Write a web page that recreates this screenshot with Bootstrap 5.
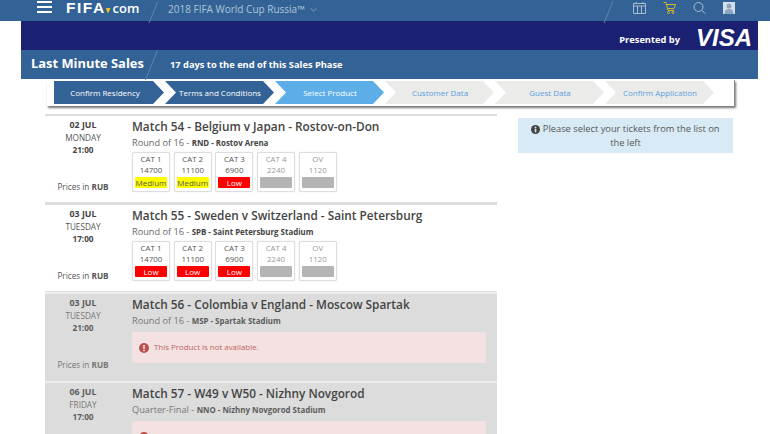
<!DOCTYPE html>
<html lang="en">
<head>
    <meta charset="UTF-8">
    <meta name="viewport" content="width=device-width, initial-scale=1.0">
    <title>Last Minute Sales</title>
    <link href="https://cdn.jsdelivr.net/npm/bootstrap@5.3.3/dist/css/bootstrap.min.css" rel="stylesheet">
    <style>
        html, body { height: 434px; overflow: hidden; }
        body { font-family: "Open Sans", "Liberation Sans", sans-serif; font-size: 10px; color: #555; background: #fff; }
        .top-bar { height: 21px; background: #336396; color: #b0c4d8; }
        .burger { width: 15px; margin-left: 37px; margin-top: 1px; }
        .burger span { display: block; height: 2px; background: #fff; margin-bottom: 3px; }
        .fifa-logo { margin-left: 14px; width: 87px; font-family: "Liberation Sans", sans-serif; font-size: 15.5px; font-weight: 700; color: #fff; line-height: 15px; display: flex; align-items: baseline; }
        .fifa-logo b { letter-spacing: 1.5px; }
        .fifa-logo svg { margin: 0 2px 0 0; }
        .fifa-logo em { font-style: normal; font-family: "Open Sans", sans-serif; font-size: 13px; font-weight: 600; }
        .slash { width: 1px; background: #5d83aa; transform: rotate(22deg); }
        .top-bar .slash { height: 24px; }
        .edition { margin-left: 14px; font-size: 10px; line-height: 18px; }
        .top-icons { margin-right: 35px; margin-top: 2px; gap: 17px; }
        .page-head { margin: 0 12px 0 21px; }
        .visa-band { height: 29px; background: #1a2172; color: #fff; padding-right: 6px; }
        .visa-band small { font-size: 9.3px; font-weight: 700; margin-right: 16px; margin-top: 8px; }
        .visa-word { font-family: "Liberation Sans", sans-serif; font-style: italic; font-weight: 700; font-size: 24px; line-height: 29px; margin-top: 3px; }
        .title-bar { height: 29px; background: #336396; color: #fff; font-weight: 700; padding-left: 10px; }
        .title-bar h1 { font-size: 12.9px; font-weight: 700; margin: 0 0 2px; width: 120px; }
        .title-bar .slash { height: 32px; margin-right: 18px; }
        .title-bar p { font-size: 9.3px; margin: 1px 0 0; }
        .stepper { margin: 1px 35px 0 47px; height: 26px; padding: 1px 0 2px 7px; box-shadow: 1px 2px 2px #777; border-right: 1px solid #888; }
        .step-item { width: 110px; flex: none; height: 23px; background: #ebebe9; color: #5d9ee0; font-size: 8px; display: flex; align-items: center; justify-content: center; clip-path: polygon(0 0, 98px 0, 109px 50%, 98px 100%, 0 100%, 11px 50%); }
        .step-item:first-child { width: 111px; padding-right: 9px; clip-path: polygon(0 0, 99px 0, 110px 50%, 99px 100%, 0 100%); }
        .step-done { background: #336396; color: #fff; }
        .step-now { background: #5daee8; color: #fff; }
        .main-area { padding: 8px 0 0 45px; gap: 21px; }
        .match-list { width: 452px; flex: none; }
        .match-row { display: flex; border-top: 2px solid #ddd; border-bottom: 1px solid #ddd; height: 89px; padding-top: 4px; }
        .match-off { background: #dcdcdc; border-top-color: #eee; color: #777; }
        .date-col { width: 87px; margin-top: -1px; text-align: center; display: flex; flex-direction: column; line-height: 12px; font-size: 8.2px; }
        .date-col > div { width: 76px; }
        .date-day { font-weight: 700; color: #444; font-size: 8.8px; margin-bottom: .5px; }
        .date-name { margin-bottom: .5px; }
        .date-time { font-weight: 700; color: #444; }
        .price-note { margin-top: auto; margin-bottom: 9px; }
        .match-off .date-day, .match-off .date-time, .match-off h2, .match-off .round-line b { color: #5c5c5c; }
        .match-off .round-line { color: #777; }
        .info-col { flex: 1; padding-right: 11px; }
        .info-col h2 { font-size: 11.8px; font-weight: 600; color: #444; margin: -2px 0 1px; line-height: 17px; }
        .round-line { font-size: 9.2px; line-height: 13px; margin-bottom: 2px; color: #666; }
        .round-line b { font-size: 7.9px; color: #444; }
        .cat-wrap { gap: 3.7px; }
        .cat-box { width: 38px; height: 40px; padding: 1px 2px; border: 1px solid #ddd; border-radius: 2px; text-align: center; font-size: 7.9px; line-height: 11px; box-shadow: 0 0 1px #ccc; background: #fff; }
        .cat-box span { display: block; }
        .cat-tag { height: 11px; margin-top: 1px; font-size: 8px; line-height: 11px; border-radius: 1px; }
        .tag-med { background: #ffff00; color: #555; }
        .tag-low { background: #ff0000; color: #fff; }
        .tag-none { background: #b4b4b4; }
        .cat-off { color: #999; }
        .no-product { margin: 4px 0 0; height: 31px; background: #f4e1e1; color: #bd6461; border-radius: 2px; font-size: 7.9px; padding: 0 7px; gap: 5px; }
        .select-note { width: 215px; height: 35px; margin-top: 4px; background: #d9eaf7; color: #555; font-size: 9.3px; line-height: 14px; text-align: center; padding: 4px 12px; }
    </style>
</head>
<body>

<div class="top-bar d-flex align-items-start">
    <div class="burger"><span></span><span></span><span></span></div>
    <div class="fifa-logo"><b>FIFA</b><svg width="5" height="5" viewBox="0 0 5 5"><path d="M0 0h4.500L2.500 4.500 1.500 5z" fill="#f2c318"/></svg><em>com</em></div>
    <div class="slash"></div>
    <div class="edition">2018 FIFA World Cup Russia™ &nbsp;<svg width="7" height="4" viewBox="0 0 7 4" fill="none" stroke="#9fb6cd" stroke-width=".7"><path d="M.5.5 3.500 3 6.500.5"/></svg></div>
    <div class="slash ms-auto me-4"></div>
    <div class="top-icons d-flex align-items-start">
        <svg width="13" height="12" viewBox="0 0 13 12" fill="none" stroke="#a9bdd1" stroke-width="1"><path d="M.5 1.500h12v10H.5zM.5 4h12M4.500 4v7.500M8.500 4v7.500M3 0v2M10 0v2"/></svg>
        <svg width="13" height="12" viewBox="0 0 13 12" fill="none" stroke="#d9b32a" stroke-width="1"><path d="M.5 .5H3l2 8h6M3.500 2.500h9l-1.500 4H4.500"/><circle cx="5.500" cy="10.500" r="1"/><circle cx="10" cy="10.500" r="1"/></svg>
        <svg width="13" height="12" viewBox="0 0 13 12" fill="none" stroke="#a9bdd1" stroke-width="1"><circle cx="5.500" cy="5" r="4.500"/><path d="M8.800 8.300l3.500 3.500"/></svg>
        <svg width="12" height="12" viewBox="0 0 12 12"><rect width="12" height="12" fill="#d5dfe9"/><circle cx="6" cy="4" r="2.500" fill="#8ca6c0"/><path d="M1.500 12c0-4 2-5 4.500-5s4.500 1 4.500 5z" fill="#8ca6c0"/></svg>
    </div>
</div>

<div class="page-head">
    <div class="visa-band d-flex justify-content-end align-items-center">
        <small>Presented by</small>
        <span class="visa-word">VISA</span>
    </div>
    <div class="title-bar d-flex align-items-center">
        <h1>Last Minute Sales</h1>
        <div class="slash"></div>
        <p>17 days to the end of this Sales Phase</p>
    </div>
</div>

<div class="stepper d-flex">
    <div class="step-item step-done">Confirm Residency</div>
    <div class="step-item step-done">Terms and Conditions</div>
    <div class="step-item step-now">Select Product</div>
    <div class="step-item">Customer Data</div>
    <div class="step-item">Guest Data</div>
    <div class="step-item">Confirm Application</div>
</div>

<div class="main-area d-flex align-items-start">
    <div class="match-list" id="matchList"></div>
    <div class="select-note">
        <svg width="9" height="9" viewBox="0 0 10 10"><circle cx="5" cy="5" r="5" fill="#444"/><rect x="4.200" y="4" width="1.700" height="4.200" fill="#d9eaf7"/><rect x="4.200" y="1.800" width="1.700" height="1.500" fill="#d9eaf7"/></svg>
        Please select your tickets from the list on the left
    </div>
</div>

<script>
    const cats = [["CAT 1", 14700], ["CAT 2", 11100], ["CAT 3", 6900], ["CAT 4", 2240], ["OV", 1120]];

    const matches = [
        { day: "02 JUL", name: "MONDAY", time: "21:00", title: "Match 54 - Belgium v Japan - Rostov-on-Don", round: "Round of 16", venue: "RND - Rostov Arena", tags: ["Medium", "Medium", "Low", "", ""] },
        { day: "03 JUL", name: "TUESDAY", time: "17:00", title: "Match 55 - Sweden v Switzerland - Saint Petersburg", round: "Round of 16", venue: "SPB - Saint Petersburg Stadium", tags: ["Low", "Low", "Low", "", ""] },
        { day: "03 JUL", name: "TUESDAY", time: "21:00", title: "Match 56 - Colombia v England - Moscow Spartak", round: "Round of 16", venue: "MSP - Spartak Stadium" },
        { day: "06 JUL", name: "FRIDAY", time: "17:00", title: "Match 57 - W49 v W50 - Nizhny Novgorod", round: "Quarter-Final", venue: "NNO - Nizhny Novgorod Stadium" }
    ];

    function catBoxes(tags) {
        return cats.map((cat, i) => {
            const tagClass = tags[i] === "Medium" ? "tag-med" : tags[i] === "Low" ? "tag-low" : "tag-none";
            return `<div class="cat-box ${tags[i] ? "" : "cat-off"}"><span>${cat[0]}</span><span>${cat[1]}</span><div class="cat-tag ${tagClass}">${tags[i]}</div></div>`;
        }).join("");
    }

    const noProduct = `<div class="no-product d-flex align-items-center">
        <svg width="10" height="10" viewBox="0 0 10 10"><circle cx="5" cy="5" r="5" fill="#b9524f"/><rect x="4.200" y="2" width="1.600" height="3.800" fill="#f4e1e1"/><rect x="4.200" y="6.700" width="1.600" height="1.500" fill="#f4e1e1"/></svg>
        This Product is not available.</div>`;

    document.getElementById("matchList").innerHTML = matches.map(m => `
        <div class="match-row ${m.tags ? "" : "match-off"}">
            <div class="date-col">
                <div class="date-day">${m.day}</div>
                <div class="date-name">${m.name}</div>
                <div class="date-time">${m.time}</div>
                <div class="price-note">Prices in <b>RUB</b></div>
            </div>
            <div class="info-col">
                <h2>${m.title}</h2>
                <div class="round-line">${m.round} - <b>${m.venue}</b></div>
                ${m.tags ? `<div class="cat-wrap d-flex">${catBoxes(m.tags)}</div>` : noProduct}
            </div>
        </div>`).join("");
</script>
<script src="https://cdn.jsdelivr.net/npm/bootstrap@5.3.3/dist/js/bootstrap.bundle.min.js"></script>
</body>
</html>
